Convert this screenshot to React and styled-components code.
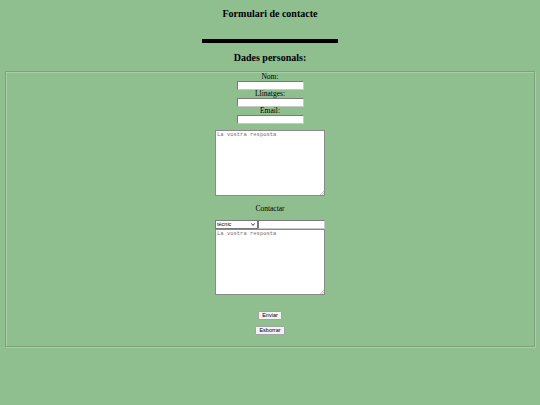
import React from "react";
import styled, { createGlobalStyle } from "styled-components";

const GlobalStyle = createGlobalStyle`
  html, body {
    margin: 0;
    padding: 0;
    background: #8fbe8f;
  }
  body {
    font-family: "Liberation Serif", "Times New Roman", serif;
    color: #000;
  }
`;

const Page = styled.div`
  width: 540px;
  height: 405px;
  display: flex;
  flex-direction: column;
  align-items: center;
  padding-top: 8px;
  box-sizing: border-box;
`;

const Title = styled.h1`
  margin: 0;
  font-size: 10px;
  line-height: 12px;
  font-weight: bold;
`;

const Bar = styled.div`
  width: 136px;
  height: 3.5px;
  background: #000;
  margin-top: 19px;
`;

const SubTitle = styled.h2`
  margin: 9px 0 0;
  font-size: 10px;
  line-height: 12px;
  font-weight: bold;
`;

const FieldSet = styled.fieldset`
  align-self: stretch;
  margin: 7px 5px 0;
  padding: 1px 0 11px;
  border: 1px solid #7f9f7f;
  box-shadow: inset 1px 1px 0 #a9cfa9, 1px 1px 0 #a9cfa9;
  display: flex;
  flex-direction: column;
  align-items: center;
`;

const Label = styled.label`
  display: block;
  font-size: 7.5px;
  line-height: 8px;
  text-align: center;
`;

const TextInput = styled.input`
  box-sizing: border-box;
  width: 67px;
  height: 9px;
  margin: 0;
  padding: 0 2px;
  border: 1px solid #7a7a7a;
  border-right-color: #c8c8c8;
  border-bottom-color: #c8c8c8;
  background: #fff;
  font-size: 6px;
`;

const TextArea = styled.textarea`
  box-sizing: border-box;
  width: 110px;
  height: ${(p) => p.$h}px;
  margin: 0;
  padding: 1px;
  border: 1px solid #8a8a8a;
  background: #fff;
  font-family: "Liberation Mono", "Courier New", monospace;
  font-size: 5.5px;
  line-height: 6px;
  resize: none;
  &::placeholder {
    color: #707070;
  }
`;

const AreaWrap = styled.div`
  position: relative;
  display: flex;
  margin-top: ${(p) => p.$mt || 0}px;
`;

const Grip = styled.svg`
  position: absolute;
  right: 1px;
  bottom: 1px;
  width: 4px;
  height: 4px;
  pointer-events: none;
`;

const Row = styled.div`
  display: flex;
  margin-top: 7px;
`;

const SelectWrap = styled.div`
  position: relative;
  display: flex;
`;

const Select = styled.select`
  box-sizing: border-box;
  width: 43px;
  height: 9px;
  margin: 0;
  padding: 0 0 0 1px;
  border: 1px solid #7a7a7a;
  border-radius: 0;
  background: #fff;
  appearance: none;
  font-family: "Liberation Sans", Arial, sans-serif;
  font-size: 5.5px;
  line-height: 7px;
  color: #000;
`;

const Chevron = styled.svg`
  position: absolute;
  right: 3px;
  top: 3px;
  width: 4px;
  height: 3px;
  pointer-events: none;
`;

const Button = styled.button`
  box-sizing: border-box;
  height: 9px;
  margin-top: ${(p) => p.$mt}px;
  padding: 0 3px;
  border: 1px solid #a3a3a3;
  border-radius: 1px;
  background: #f3f3f3;
  font-family: "Liberation Sans", Arial, sans-serif;
  font-size: 5.5px;
  line-height: 7px;
  color: #000;
`;

const Gap = styled.div`
  height: ${(p) => p.$h}px;
`;

const Answer = ({ h, mt }) => (
  <AreaWrap $mt={mt}>
    <TextArea $h={h} placeholder="La vostra resposta" />
    <Grip viewBox="0 0 4 4">
      <path d="M4 0 L0 4 M4 2 L2 4" stroke="#9a9a9a" strokeWidth="0.6" />
    </Grip>
  </AreaWrap>
);

export default function App() {
  return (
    <>
      <GlobalStyle />
      <Page>
        <Title>Formulari de contacte</Title>
        <Bar />
        <SubTitle>Dades personals:</SubTitle>
        <FieldSet>
          <Label>Nom:</Label>
          <TextInput type="text" />
          <Label>Llinatges:</Label>
          <TextInput type="text" />
          <Label>Email:</Label>
          <TextInput type="email" />
          <Answer h={66} mt={6} />
          <Gap $h={9} />
          <Label>Contactar</Label>
          <Row>
            <SelectWrap>
              <Select defaultValue="tecnic">
                <option value="tecnic">técnic</option>
                <option value="comercial">comercial</option>
              </Select>
              <Chevron viewBox="0 0 4 3">
                <path d="M0.3 0.4 L2 2.4 L3.7 0.4" fill="none" stroke="#222" strokeWidth="0.9" />
              </Chevron>
            </SelectWrap>
            <TextInput type="text" />
          </Row>
          <Answer h={66} />
          <Button $mt={16}>Enviar</Button>
          <Button $mt={6}>Esborrar</Button>
        </FieldSet>
      </Page>
    </>
  );
}
